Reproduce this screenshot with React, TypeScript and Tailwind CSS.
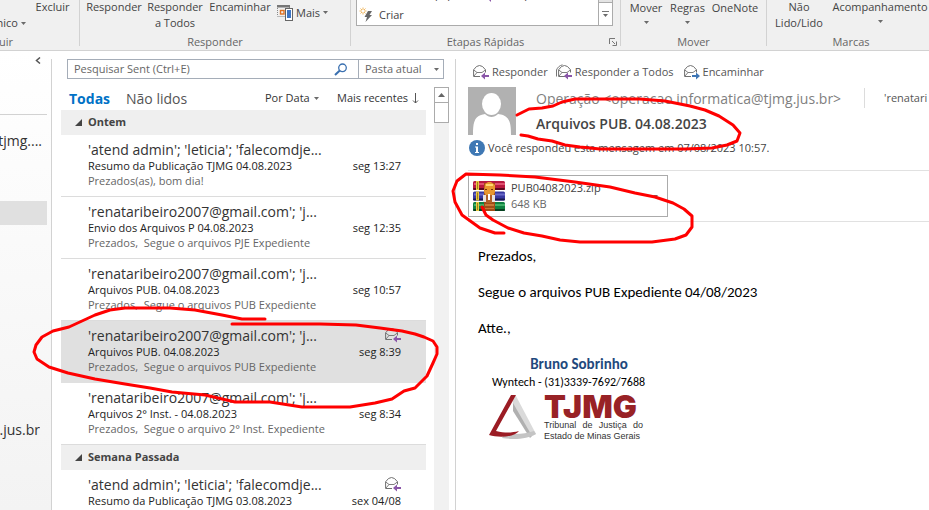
import React from "react";

const segoe = "font-['Open_Sans','Noto_Sans',sans-serif]";

function Caret({ className = "" }: { className?: string }) {
  return (
    <svg className={`h-[3px] w-[5px] shrink-0 ${className}`} viewBox="0 0 5 3" aria-hidden="true">
      <path d="M0 0h5L2.5 3z" fill="#6a6a6a" />
    </svg>
  );
}

function Group({ label, className = "", children }: { label: string; className?: string; children: React.ReactNode }) {
  return (
    <section className={`relative flex h-[50px] shrink-0 flex-col justify-end ${className}`} aria-label={label}>
      {children}
      <div className="mt-[3px] text-center text-[11px] leading-4 text-[#666]">{label}</div>
    </section>
  );
}

function Divider() {
  return <div className="h-[46px] w-px shrink-0 bg-[#d2d2d2]" />;
}

function Envelope({ kind }: { kind: "reply" | "all" | "forward" }) {
  const color = kind === "forward" ? "#3f76b5" : "#8a56a8";
  return (
    <svg className="h-4 w-4 shrink-0" viewBox="0 0 16 16" fill="none" aria-hidden="true">
      {kind === "all" && <path d="M.5 12.500V6C1.500 3.500 3.500 1.500 6.500.800" stroke="#777" />}
      <g transform={kind === "all" ? "translate(2 0)" : undefined}>
        <path d="M7 12.500H.6V5.800L3.500 2.500Q6.500.500 9.500 2.500L12.500 5.800V8.500" stroke="#707070" />
        <path d="M.8 6L4 8.500h5L12.300 6M4 8.500L1 12" stroke="#707070" strokeWidth=".9" />
      </g>
      {kind === "forward" ? (
        <path d="M8 11h4V8.600L16 12l-4 3.400V13H8z" fill={color} />
      ) : (
        <path d="M16 11h-4V8.600L8 12l4 3.400V13h4z" fill={color} />
      )}
    </svg>
  );
}

function Ribbon() {
  return (
    <header className="flex h-[51px] shrink-0 overflow-hidden border-b border-[#d2d2d2] bg-[#f0f0f0] text-[11px] leading-4 text-[#444]">
      <section className="flex h-[50px] w-[79px] shrink-0 flex-col justify-end" aria-label="Excluir">
        <div className="flex h-8">
          <button className="mt-4 flex w-[26px] shrink-0 items-center justify-end gap-[3px]">
            nico <Caret />
          </button>
          <button className="flex w-[53px] items-start justify-center">Excluir</button>
        </div>
        <div className="mt-[3px] flex w-[13px] justify-end text-[#666]">uir</div>
      </section>
      <Divider />
      <Group label="Responder" className="w-[270px]">
        <div className="flex h-8 items-start pl-[5px]">
          <button className="w-[58px]">Responder</button>
          <button className="w-[64px]">Responder a&nbsp;Todos</button>
          <button className="w-[66px] text-center">Encaminhar</button>
          <button className="flex h-[27px] items-center gap-[3px] pl-1">
            <svg className="h-4 w-4" viewBox="0 0 16 16" fill="none" aria-hidden="true">
              <path d="M.5 3v8M.5 11.500H8M12.500 2v1" stroke="#888" strokeDasharray="1 1" />
              <path d="M0 0h13v2.500H0z" fill="#777" />
              <rect x="3.500" y="5.500" width="3.500" height="3.500" stroke="#e07020" strokeWidth="1.400" />
              <rect x="8.500" y="3.500" width="7" height="12" fill="#fff" stroke="#666" />
              <rect x="10" y="5" width="4" height="8" fill="#3f76c5" />
            </svg>
            Mais <Caret />
          </button>
        </div>
      </Group>
      <Divider />
      <Group label="Etapas Rápidas" className="w-[269px]">
        <div className="mb-[5px] ml-[5px] flex h-7 w-[257px] border border-t-0 border-[#ababab] bg-white">
          <div className="flex flex-1 flex-col justify-end overflow-hidden">
            <div className="flex items-end pb-1 pl-[68px]">
              <span className="w-[40px] shrink-0">Equipe</span>
              <svg className="mr-3 ml-[22px] h-2 w-[7px]" viewBox="0 0 7 8" aria-hidden="true">
                <path d="M0 4l4-4v3h3v2H4v3z" fill="#8a56a8" />
              </svg>
              <span className="shrink-0">Responder</span>
            </div>
            <button className="flex shrink-0 items-center gap-[6px] pb-px pl-[2px] leading-[18px]">
              <svg className="h-4 w-[14px]" viewBox="0 0 14 16" aria-hidden="true">
                <path d="M4 .5v7M.5 4h7M1.500 1.500l5 5M6.500 1.500l-5 5" stroke="#eeb050" strokeWidth=".9" />
                <circle cx="4" cy="4" r="1.200" fill="#fff" />
                <path d="M9 4h4l-2.500 4H13L6.500 15 8 10H5.500z" fill="#666" />
              </svg>
              Criar
            </button>
          </div>
          <div className="flex w-[14px] flex-col border-l border-[#ababab]">
            <div className="h-[5px] border-b border-[#ababab] bg-[#e4e4e4]" />
            <button className="flex flex-1 flex-col items-center justify-center gap-[2px]" aria-label="Mais etapas">
              <span className="h-px w-[7px] bg-[#777]" />
              <Caret />
            </button>
          </div>
        </div>
        <button className="absolute right-[3px] bottom-1 h-2 w-2" aria-label="Opções">
          <svg viewBox="0 0 8 8" fill="none" aria-hidden="true">
            <path d="M.5 6V.5H6M3 3l3 3M7.500 3.500v4h-4" stroke="#777" />
          </svg>
        </button>
      </Group>
      <Divider />
      <Group label="Mover" className="w-[145px]">
        <div className="flex h-8 items-start pl-1">
          <button className="flex w-[42px] flex-col items-center gap-[5px]">Mover <Caret /></button>
          <button className="flex w-[41px] flex-col items-center gap-[5px]">Regras <Caret /></button>
          <button className="w-[54px] text-center">OneNote</button>
        </div>
      </Group>
      <Divider />
      <Group label="Marcas" className="w-[168px]">
        <div className="flex h-8 items-start pl-[3px]">
          <button className="w-[58px]">Não Lido/Lido</button>
          <button className="flex w-[104px] flex-col items-center gap-[5px]">Acompanhamento <Caret /></button>
        </div>
      </Group>
    </header>
  );
}

function Folders() {
  return (
    <nav className="flex w-[51px] shrink-0 flex-col bg-linear-to-b from-white to-[#f3f3f3] text-[14px] text-[#333]" aria-label="Pastas">
      <button className="flex h-[63px] items-start justify-end pt-[6px] pr-[10px]" aria-label="Recolher">
        <svg className="h-[7px] w-[6px]" viewBox="0 0 6 7" fill="none">
          <path d="M5 .5L1.500 3.500 5 6.500" stroke="#555" strokeWidth="1.500" />
        </svg>
      </button>
      <div className="mr-1 h-px bg-[#d2d2d2]" />
      <a href="#conta" className="mt-[15px] flex h-5 w-[42px] items-center justify-end">tjmg....</a>
      <div className="mt-[51px] mr-1 h-6 bg-[#e0e0e0]" />
      <a href="#conta2" className="mt-[194px] flex h-5 w-10 items-center justify-end overflow-hidden">g.jus.br</a>
    </nav>
  );
}

type Mail = { from: string; subject: string; preview?: string; time: string; replied?: boolean; selected?: boolean };

const yesterday: Mail[] = [
  { from: "'atend admin'; 'leticia'; 'falecomdje...", subject: "Resumo da Publicação TJMG 04.08.2023", preview: "Prezados(as), bom dia!", time: "seg 13:27" },
  { from: "'renataribeiro2007@gmail.com'; 'j...", subject: "Envio dos Arquivos P 04.08.2023", preview: "Prezados,  Segue o arquivos PJE Expediente", time: "seg 12:35" },
  { from: "'renataribeiro2007@gmail.com'; 'j...", subject: "Arquivos PUB. 04.08.2023", preview: "Prezados,  Segue o arquivos PUB Expediente", time: "seg 10:57" },
  { from: "'renataribeiro2007@gmail.com'; 'j...", subject: "Arquivos PUB. 04.08.2023", preview: "Prezados,  Segue o arquivos PUB Expediente", time: "seg 8:39", replied: true, selected: true },
  { from: "'renataribeiro2007@gmail.com'; 'j...", subject: "Arquivos 2° Inst. - 04.08.2023", preview: "Prezados,  Segue o arquivo 2° Inst. Expediente", time: "seg 8:34" },
];

const lastWeek: Mail[] = [
  { from: "'atend admin'; 'leticia'; 'falecomdje...", subject: "Resumo da Publicação TJMG 03.08.2023", time: "sex 04/08", replied: true },
];

function MailRow({ mail }: { mail: Mail }) {
  return (
    <li className={`h-[62px] border-b pt-1 pr-[25px] pl-[27px] ${mail.selected ? "border-[#e0e0e0] bg-[#e0e0e0]" : "border-[#dcdcdc]"}`}>
      <div className="flex h-[19px] items-start justify-between">
        <span className="text-[14px] leading-[21px] whitespace-nowrap text-[#333]">{mail.from}</span>
        {mail.replied && <span className="pt-[2px]"><Envelope kind="reply" /></span>}
      </div>
      <div className="flex justify-between text-[11px] leading-[15px] whitespace-nowrap text-[#222]">
        <span>{mail.subject}</span>
        <time>{mail.time}</time>
      </div>
      <div className="text-[11px] leading-[15px] whitespace-pre text-[#666]">{mail.preview}</div>
    </li>
  );
}

function GroupHeader({ title }: { title: string }) {
  return (
    <h2 className="flex h-[25px] items-center gap-[6px] bg-[#efefef] pl-[14px] text-[11px] font-bold text-[#444]">
      <svg className="h-[7px] w-[7px]" viewBox="0 0 7 7" aria-hidden="true">
        <path d="M7 0v7H0z" fill="#444" />
      </svg>
      {title}
    </h2>
  );
}

function MailList() {
  return (
    <main className="mt-2 flex w-[405px] shrink-0 flex-col border-x border-[#d2d2d2] pr-[5px] pl-[9px]">
      <div className="ml-[6px] flex h-[20px] w-[377px] shrink-0 border border-[#a5adb8] text-[11px] text-[#666]">
        <input
          className="min-w-0 flex-1 px-[6px] outline-none placeholder:text-[#666]"
          placeholder="Pesquisar Sent (Ctrl+E)"
          aria-label="Pesquisar"
        />
        <button className="flex w-[34px] items-center justify-center" aria-label="Buscar">
          <svg className="h-[13px] w-[14px]" viewBox="0 0 14 13" fill="none">
            <circle cx="8.500" cy="4.800" r="3.800" stroke="#3a70b0" strokeWidth="1.300" />
            <path d="M5.800 7.500L1 12" stroke="#3a70b0" strokeWidth="2" />
          </svg>
        </button>
        <button className="flex w-[85px] items-center justify-between border-l border-[#a5adb8] pr-1 pl-[6px]">
          Pasta atual <Caret />
        </button>
      </div>
      <div className="flex min-h-0 flex-1">
        <div className="w-[365px] shrink-0 overflow-hidden">
          <div className="flex h-[31px] items-center pt-2 pl-2">
            <button className="w-[57px] text-left text-[14px] leading-5 font-bold text-[#0072c6]">Todas</button>
            <button className="w-[139px] text-left text-[14px] leading-5 text-[#555]">Não lidos</button>
            <button className="flex w-[72px] items-center gap-1 text-[11px] text-[#333]">Por Data <Caret /></button>
            <button className="flex items-center gap-1 text-[11px] whitespace-nowrap text-[#333]">
              Mais recentes
              <svg className="h-[11px] w-[7px]" viewBox="0 0 7 11" fill="none" aria-hidden="true">
                <path d="M3.500 0v10M1 7.500L3.500 10 6 7.500" stroke="#555" />
              </svg>
            </button>
          </div>
          <GroupHeader title="Ontem" />
          <ul>{yesterday.map((m, i) => <MailRow key={i} mail={m} />)}</ul>
          <GroupHeader title="Semana Passada" />
          <ul>{lastWeek.map((m, i) => <MailRow key={i} mail={m} />)}</ul>
        </div>
        <div className="mt-2 ml-2 flex w-[15px] flex-col bg-[#f1f1f1]">
          <div className="flex h-4 items-center justify-center border border-[#ababab] bg-white">
            <svg className="h-1 w-[7px]" viewBox="0 0 7 4" aria-hidden="true"><path d="M0 4h7L3.500 0z" fill="#666" /></svg>
          </div>
          <div className="h-5 border border-t-0 border-[#ababab] bg-white" />
        </div>
      </div>
    </main>
  );
}

function Books() {
  const row = (y: number, a: string, b: string, c: string) => (
    <g>
      <rect x="0" y={y} width="32" height="9" rx="1.500" fill={a} />
      <rect x="1" y={y + 2} width="31" height="2" fill={b} />
      <rect x="0" y={y + 7} width="32" height="2" rx="1" fill={c} />
      <path d={`M3 ${y}h3v9H3z`} fill="#e8c840" />
      <path d={`M4 ${y + 1}h1v7H4z`} fill="#a08018" />
    </g>
  );
  return (
    <svg className="h-[30px] w-8 shrink-0" viewBox="0 0 32 30" aria-hidden="true">
      {row(0, "#b81840", "#e05070", "#600820")}
      {row(10.5, "#3838a0", "#6868c8", "#181850")}
      {row(21, "#108040", "#40b068", "#064020")}
      <rect x="11" y="2" width="11" height="28" fill="#a04c18" />
      <path d="M12 3l3-2h3l4 3v7l-2 4h-7l-2-4z" fill="#e89830" />
      <path d="M13 3h7v2h-7z" fill="#ffd870" />
      <path d="M12 8h2v1h-2zM18 8h2v1h-2z" fill="#703008" />
      <path d="M10 14h3v7h-3zM19 14h3v7h-3z" fill="#e8e4e0" />
      <path d="M13 14h6v8h-6z" fill="#b06028" />
      <path d="M15 13h2v6h-2z" fill="#fff" />
      <path d="M12 23h9v2h-9zM12 27h9v1h-9z" fill="#c87838" />
    </svg>
  );
}

function Reading() {
  return (
    <article className="min-w-0 flex-1 overflow-hidden pl-3">
      <div className="flex h-9 items-center pt-[6px] pl-[5px] text-[11px] text-[#555]">
        <button className="flex items-center gap-[3px]"><Envelope kind="reply" />Responder</button>
        <button className="ml-2 flex items-center gap-[3px]"><Envelope kind="all" />Responder a Todos</button>
        <button className="ml-[10px] flex items-center gap-[3px]"><Envelope kind="forward" />Encaminhar</button>
      </div>
      <header className="flex">
        <svg className="h-12 w-12 shrink-0" viewBox="0 0 48 48" aria-hidden="true">
          <path fill="#b1b1b1" d="M0 0h48v48H0z" />
          <ellipse cx="23.500" cy="17" rx="9.500" ry="11" fill="#fff" />
          <path d="M5 48c0-11 1-18 8-20 3-1 4-1 4-1 4 4 9 4 13 0 0 0 2 0 5 1 7 3 8 9 8 20z" fill="#fff" />
        </svg>
        <div className="ml-5 min-w-0 flex-1">
          <div className="flex h-[22px] items-center whitespace-nowrap">
            <span className="w-[328px] text-[14px] text-[#808080]">Operação &lt;operacao.informatica@tjmg.jus.br&gt;</span>
            <span className="h-5 w-px bg-[#dcdcdc]" />
            <span className="ml-[19px] text-[11px] text-[#555]">'renatari</span>
          </div>
          <h1 className="mt-1 text-[14px] leading-[22px] font-semibold text-[#444]">Arquivos PUB. 04.08.2023</h1>
        </div>
      </header>
      <p className="mt-[5px] flex h-4 items-center gap-[3px] pl-px text-[11px] whitespace-nowrap text-[#444]">
        <svg className="h-4 w-4" viewBox="0 0 16 16" aria-hidden="true">
          <circle cx="8" cy="8" r="8" fill="#3f78b4" />
          <path d="M6 6.500h3V12h1v1H6v-1h1V7.500H6zM7 3h2v2H7z" fill="#fff" />
        </svg>
        Você respondeu esta mensagem em 07/08/2023 10:57.
      </p>
      <div className="mt-[14px] border-y border-[#e1e1e1] py-1">
        <button className="flex h-[42px] w-[200px] items-center border border-[#ababab] bg-white pr-[9px] pl-1 text-left text-[11px] leading-4">
          <Books />
          <span className="ml-[6px] flex-1 text-[#444]">
            PUB04082023.zip
            <span className="block text-[#666]">648 KB</span>
          </span>
          <Caret />
        </button>
      </div>
      <div className="pt-[25px] pl-[10px] font-['Carlito','Lato',sans-serif] text-[15px] leading-[18px] text-black">
        <p>Prezados,</p>
        <p className="mt-[18px]">Segue o arquivos PUB Expediente 04/08/2023</p>
        <p className="mt-[18px]">Atte.,</p>
        <div className="mt-[18px] ml-[11px] w-[158px]">
          <p className="ml-[22px] text-center font-bold text-[#1f497d]">Bruno Sobrinho</p>
          <p className="pl-[3px] text-[12px] whitespace-nowrap">Wyntech - (31)3339-7692/7688</p>
          <div className="mt-1 flex">
            <svg className="h-[46px] w-[47px] shrink-0" viewBox="0 0 47 46" aria-hidden="true">
              <path d="M23 1h4l20 38-5 2-18-31z" fill="#dadada" />
              <path d="M24 8l19 33-2 2L24 16z" fill="#b0b0b0" />
              <path d="M16 38c10 2 20 1 29-2l2 3c-8 5-22 6-34 4z" fill="#c4c4c4" />
              <path d="M22 0h5L7 36c9 2 15 2 23 0-4 6-20 7-30 4z" fill="#9b1c24" />
            </svg>
            <div className="ml-2 whitespace-nowrap font-['Liberation_Sans',Arial,sans-serif] text-[9px] leading-[11px] text-[#333]">
              <div className="h-[25px] font-[Inter,sans-serif] text-[32px] leading-[24px] font-black text-[#982226]">TJMG</div>
              <div className="flex w-[99px] justify-between"><span>Tribunal</span> <span>de</span> <span>Justiça</span> <span>do</span></div>
              <div>Estado de Minas Gerais</div>
            </div>
          </div>
        </div>
      </div>
    </article>
  );
}

function Annotations() {
  return (
    <svg className="pointer-events-none absolute top-0 left-0 h-[510px] w-[929px]" viewBox="0 0 929 510" fill="none" stroke="#f00" strokeWidth="3" strokeLinecap="round" strokeLinejoin="round" aria-hidden="true">
      <path d="M265 319L242 319L222 315L195 310L170 308H125L110 310L95 315L82 321L69 327L53 331L42 337L36 345L34 352L37 359L49 367L68 373L95 379L125 384L150 388L172 392L205 395L235 402L270 402L302 407H350L375 403L392 399L404 391L415 388L427 376L433 363L437 354V347L433 341L424 337L415 334L402 331L380 328L356 325L320 324H232" />
      <path d="M517 115L529 109L542 108L553 106L562 102L575 99H640L665 101L690 106L705 110L719 116L733 125L740 133L737 141L727 145L712 148L685 149H600L580 147L565 145L552 141L538 139L528 136L521 135" />
      <path d="M504 233H495L480 228L462 215L455 202L453 191L457 181L466 174L500 175L535 177L575 182L610 187L635 193L655 197L673 203L684 209L692 216V227L686 235L675 239L652 242H580L560 240L542 236L524 233L508 228L493 220L486 215L482 207" />
    </svg>
  );
}

export default function App() {
  return (
    <div className={`relative flex h-screen flex-col overflow-hidden bg-white ${segoe}`}>
      <Ribbon />
      <div className="flex min-h-0 flex-1">
        <Folders />
        <MailList />
        <Reading />
      </div>
      <Annotations />
    </div>
  );
}
